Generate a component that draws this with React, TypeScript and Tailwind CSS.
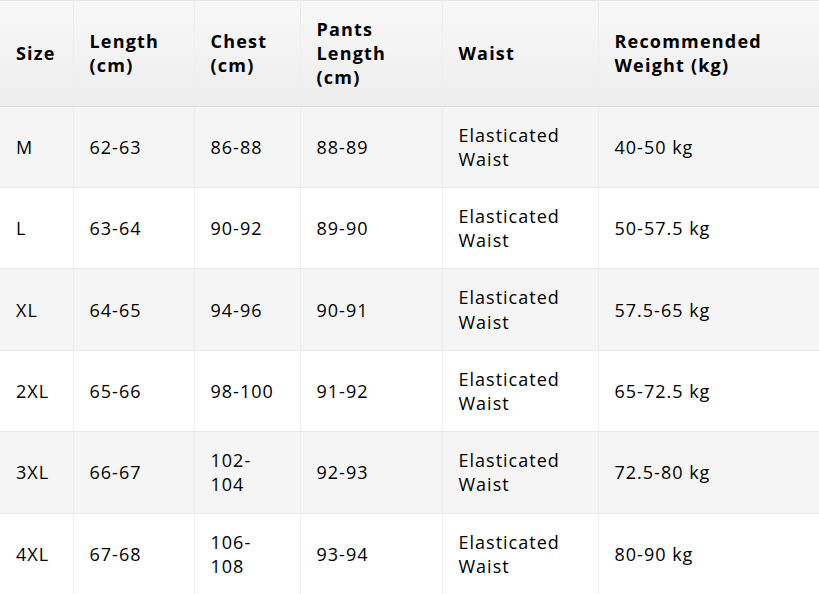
import React from "react";

const headers = ["Size", "Length (cm)", "Chest (cm)", "Pants Length (cm)", "Waist", "Recommended Weight (kg)"];
const rows = [
  ["M", "62-63", "86-88", "88-89", "Elasticated Waist", "40-50 kg"],
  ["L", "63-64", "90-92", "89-90", "Elasticated Waist", "50-57.5 kg"],
  ["XL", "64-65", "94-96", "90-91", "Elasticated Waist", "57.5-65 kg"],
  ["2XL", "65-66", "98-100", "91-92", "Elasticated Waist", "65-72.5 kg"],
  ["3XL", "66-67", "102-104", "92-93", "Elasticated Waist", "72.5-80 kg"],
  ["4XL", "67-68", "106-108", "93-94", "Elasticated Waist", "80-90 kg"],
];
const widths = ["w-[73px]", "w-[121px]", "w-[106px]", "w-[142px]", "w-[156px]", "w-[221px]"];

export default function App() {
  return (
    <div className="w-[819px] h-[594px] overflow-hidden bg-white">
      <table
        className="table-fixed border-collapse w-[819px] text-[18px] leading-[24.2px] tracking-[1px] text-black"
        style={{ fontFamily: '"Open Sans", "Noto Sans", sans-serif' }}
      >
        <colgroup>
          {widths.map((w, i) => (
            <col key={i} className={w} />
          ))}
        </colgroup>
        <thead>
          <tr className="bg-gradient-to-b from-[#f8f8f8] to-[#ededed]">
            {headers.map((h, i) => (
              <th
                key={i}
                className="text-left align-middle font-bold tracking-[1.2px] px-4 py-4 border-t border-t-[#e6e6e6] border-b border-b-[#d9d9d9] border-r border-r-[#eeeeee] last:border-r-0 text-black"
              >
                {h}
              </th>
            ))}
          </tr>
        </thead>
        <tbody>
          {rows.map((r, ri) => (
            <tr key={ri} className={ri % 2 === 0 ? "bg-[#f5f5f5]" : "bg-white"}>
              {r.map((c, ci) => (
                <td
                  key={ci}
                  className="align-middle px-4 py-4 border-b border-b-[#e8e8e8] border-r border-r-[#eeeeee] last:border-r-0"
                >
                  {c}
                </td>
              ))}
            </tr>
          ))}
        </tbody>
      </table>
    </div>
  );
}
